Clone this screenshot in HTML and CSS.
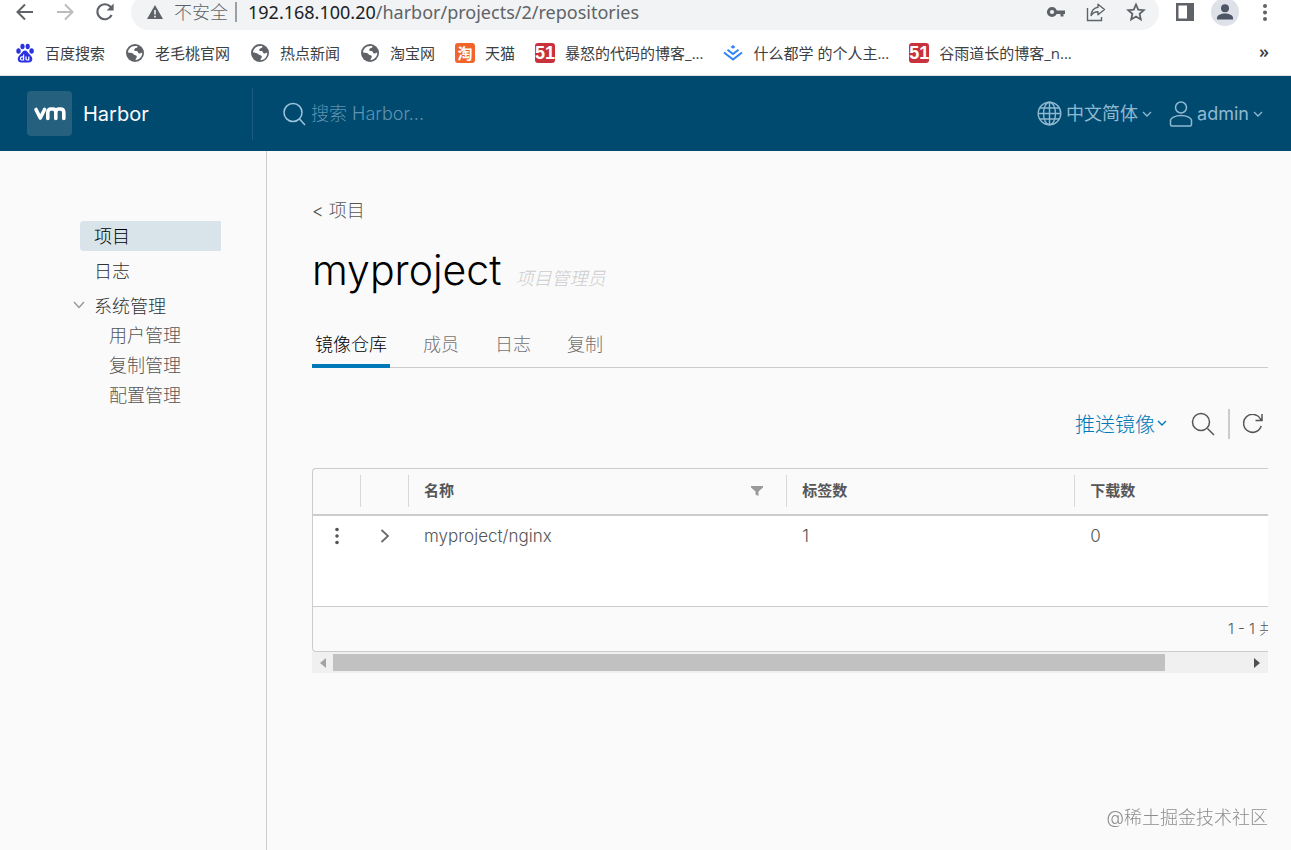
FILE: index.html
```html
<!DOCTYPE html>
<html lang="zh-CN">
<head>
    <meta charset="UTF-8">
    <meta name="viewport" content="width=device-width, initial-scale=1.0">
    <title>Harbor</title>
    <link rel="stylesheet" href="styles.css">
</head>
<body>
    <!-- Browser toolbar -->
    <div class="toolbar">
        <div class="toolbar-group nav-buttons">
            <button class="tool-btn" type="button" aria-label="后退">
                <svg width="20" height="20" viewBox="0 0 20 20" fill="none" stroke="#5f6368" stroke-width="2"><path d="M18 10H3M10 2.500L2.500 10l7.500 7.500"/></svg>
            </button>
            <button class="tool-btn" type="button" aria-label="前进">
                <svg width="20" height="20" viewBox="0 0 20 20" fill="none" stroke="#babcbe" stroke-width="2"><path d="M2 10h15M10 2.500l7.500 7.500-7.500 7.500"/></svg>
            </button>
            <button class="tool-btn" type="button" aria-label="重新加载">
                <svg width="20" height="20" viewBox="0 0 20 20" fill="none" stroke="#5f6368" stroke-width="2.200"><path d="M16.600 13A7.500 7.500 0 1 1 15.500 4.800L17 6.500"/><path d="M18.600 1.500v7h-7z" fill="#5f6368" stroke="none"/></svg>
            </button>
        </div>
        <div class="address">
            <svg width="16" height="16" viewBox="0 0 16 16"><path d="M8 1l8 14H0z" fill="#5f6368"/><path d="M8 6v4.500M8 11.800v1.700" stroke="#f1f3f4" stroke-width="1.600"/></svg>
            <span class="unsafe">不安全</span>
            <span class="url"><b>192.168.100.20</b>/harbor/projects/2/repositories</span>
            <div class="address-actions">
                <button class="tool-btn" type="button" aria-label="密码">
                    <svg width="20" height="20" viewBox="0 0 20 20"><circle cx="6" cy="10" r="3.600" fill="none" stroke="#5f6368" stroke-width="3"/><path d="M10 8.500h9v3.500h-1.500v2.500h-3V12H10z" fill="#5f6368"/></svg>
                </button>
                <button class="tool-btn" type="button" aria-label="分享">
                    <svg width="20" height="20" viewBox="0 0 20 20" fill="none" stroke="#5f6368" stroke-width="1.400"><path d="M1.500 6v12.500h14V15"/><path d="M12 2.200l6.500 5.300-6.500 5.200V9.800c-3 0-5 .8-7 3.700.5-5 3-7.800 7-8.300z" stroke-linejoin="round"/></svg>
                </button>
                <button class="tool-btn" type="button" aria-label="收藏">
                    <svg width="20" height="20" viewBox="0 0 20 20" fill="none" stroke="#5f6368" stroke-width="1.800"><path d="M10 2.500l2.200 5.200 5.600.5-4.200 3.700 1.200 5.500L10 14.500l-4.800 2.900 1.200-5.500-4.200-3.700 5.600-.5z"/></svg>
                </button>
            </div>
        </div>
        <div class="toolbar-group">
            <button class="tool-btn" type="button" aria-label="侧边栏">
                <svg width="20" height="20" viewBox="0 0 20 20"><path d="M1 1h18v18H1z" fill="#5f6368"/><path d="M3.500 3.500h8.500v13H3.500z" fill="#fff"/></svg>
            </button>
            <button class="tool-btn profile" type="button" aria-label="用户">
                <svg width="20" height="20" viewBox="0 0 20 20" fill="#4d5567"><circle cx="10" cy="6.300" r="4"/><path d="M2 17.500v-1.500c0-3 4-4.500 8-4.500s8 1.500 8 4.500v1.500z"/></svg>
            </button>
            <button class="tool-btn" type="button" aria-label="菜单">
                <svg width="20" height="20" viewBox="0 0 20 20" fill="#5f6368"><circle cx="10" cy="4" r="2"/><circle cx="10" cy="10.500" r="2"/><circle cx="10" cy="17" r="2"/></svg>
            </button>
        </div>
    </div>

    <!-- Bookmarks -->
    <nav class="bookmarks">
        <a href="#">
            <svg width="20" height="20" viewBox="0 0 20 20" fill="#2932e1"><ellipse cx="3.500" cy="8" rx="2.200" ry="2.800"/><ellipse cx="7.500" cy="3.500" rx="2.100" ry="2.800"/><ellipse cx="12.700" cy="3.500" rx="2.100" ry="2.800"/><ellipse cx="16.600" cy="8" rx="2.200" ry="2.800"/><path d="M10 7.500c2 0 2.800 2 4.500 3.700 2.200 2 3 3.300 2.800 5.300-.3 2.300-2 3.200-4.200 3H7c-2.300.2-4-.7-4.200-3-.2-2 .6-3.300 2.700-5.300C7.200 9.500 8 7.500 10 7.500z"/><path d="M8.600 11.500v5.500H7a1.500 1.500 0 0 1 0-3.200h1.600M11 13.500v2.500c0 .8.400 1 1.200 1h1.600v-3.500" fill="none" stroke="#fff" stroke-width="1.200"/></svg>
            百度搜索
        </a>
        <a href="#">
            <svg width="20" height="20" viewBox="0 0 20 20"><circle cx="10" cy="10" r="9" fill="#5f6368"/><path d="M12.500 3.200c.2 2-2.300 1.500-3 2.800-.6 1.200-.2 2.200 1.500 2 2.200-.2 1.800 2.500 3.500 2.600 1.500 0 1.800-1 2.700-1 .3 3.700-2.500 7.400-6.700 7.600 0-2 1.500-1.800 1.300-3.700-.2-1.500-2-1-3-2C7.700 10.300 6.500 9.700 3 9.600c0-3.600 3.500-7.800 9.500-6.400z" fill="#fff"/></svg>
            老毛桃官网
        </a>
        <a href="#">
            <svg width="20" height="20" viewBox="0 0 20 20"><circle cx="10" cy="10" r="9" fill="#5f6368"/><path d="M12.500 3.200c.2 2-2.300 1.500-3 2.800-.6 1.200-.2 2.200 1.500 2 2.200-.2 1.800 2.500 3.500 2.600 1.500 0 1.800-1 2.700-1 .3 3.700-2.500 7.400-6.700 7.600 0-2 1.500-1.800 1.300-3.700-.2-1.500-2-1-3-2C7.700 10.300 6.500 9.700 3 9.600c0-3.600 3.500-7.800 9.500-6.400z" fill="#fff"/></svg>
            热点新闻
        </a>
        <a href="#">
            <svg width="20" height="20" viewBox="0 0 20 20"><circle cx="10" cy="10" r="9" fill="#5f6368"/><path d="M12.500 3.200c.2 2-2.300 1.500-3 2.800-.6 1.200-.2 2.200 1.500 2 2.200-.2 1.800 2.500 3.500 2.600 1.500 0 1.800-1 2.700-1 .3 3.700-2.500 7.400-6.700 7.600 0-2 1.500-1.800 1.300-3.700-.2-1.500-2-1-3-2C7.700 10.300 6.500 9.700 3 9.600c0-3.600 3.500-7.800 9.500-6.400z" fill="#fff"/></svg>
            淘宝网
        </a>
        <a href="#"><span class="favicon tao">淘</span>天猫</a>
        <a href="#"><span class="favicon cto">51</span>暴怒的代码的博客_...</a>
        <a href="#">
            <svg width="20" height="20" viewBox="0 0 20 20" fill="none" stroke="#2f83f7" stroke-width="2"><path d="M1 9.500l9 7 9-7M4.500 6.800L10 11l5.500-4.200"/><path d="M10 2l2.400 1.900L10 5.800 7.600 3.900z" fill="#2f83f7" stroke="none"/></svg>
            什么都学 的个人主...
        </a>
        <a href="#"><span class="favicon cto">51</span>谷雨道长的博客_n...</a>
        <button class="more" type="button" aria-label="更多书签">»</button>
    </nav>

    <!-- Harbor header -->
    <header class="header">
        <a class="branding" href="#">
            <span class="logo">
                <svg width="34" height="16" viewBox="0 0 34 16" fill="none" stroke="#fff" stroke-width="3.600" stroke-linecap="round" stroke-linejoin="round"><path d="M3 3.500l4.300 8.500L11.600 3.500"/><path d="M14.800 12.500V6.500Q14.800 3 18 3H20Q22.800 3 22.800 6.500V12.500M22.800 6.500Q22.800 3 25.500 3H27.500Q30.800 3 30.800 6.500V12.500"/></svg>
            </span>
            Harbor
        </a>
        <label class="search">
            <svg width="24" height="24" viewBox="0 0 24 24" fill="none" stroke="#9fc5db" stroke-width="1.500"><circle cx="10" cy="10.500" r="9"/><path d="M16.500 17l5.500 6"/></svg>
            <input type="text" placeholder="搜索 Harbor..." aria-label="搜索 Harbor">
        </label>
        <div class="header-actions">
            <button type="button">
                <svg width="25" height="25" viewBox="0 0 25 25" fill="none" stroke="#8fb9d0" stroke-width="1.400"><circle cx="12.500" cy="12.500" r="11.300"/><ellipse cx="12.500" cy="12.500" rx="6" ry="11.300"/><path d="M12.500 1v23M1 12.500h23M3 7h19M3 18h19"/></svg>
                中文简体
                <svg width="10" height="6" viewBox="0 0 10 6" fill="none" stroke="#8fb9d0" stroke-width="1.300"><path d="M1 1l4 4 4-4"/></svg>
            </button>
            <button type="button">
                <svg width="24" height="26" viewBox="0 0 24 26" fill="none" stroke="#8fb9d0" stroke-width="1.500"><circle cx="12" cy="6.500" r="5.500"/><path d="M1.500 23.500v-4C1.500 17 6 14.500 12 14.500s10.500 2.500 10.500 5v4q0 1.500-1.500 1.500H3q-1.500 0-1.500-1.500z"/></svg>
                admin
                <svg width="10" height="6" viewBox="0 0 10 6" fill="none" stroke="#8fb9d0" stroke-width="1.300"><path d="M1 1l4 4 4-4"/></svg>
            </button>
        </div>
    </header>

    <div class="main">
        <nav class="sidebar">
            <a class="nav-link active" href="#">项目</a>
            <a class="nav-link" href="#">日志</a>
            <div class="nav-group">
                <button class="nav-toggle" type="button">
                    <svg width="12" height="8" viewBox="0 0 12 8" fill="none" stroke="#9a9a9a" stroke-width="1.500"><path d="M1 1l5 5.500L11 1"/></svg>
                    系统管理
                </button>
                <a class="nav-sub" href="#">用户管理</a>
                <a class="nav-sub" href="#">复制管理</a>
                <a class="nav-sub" href="#">配置管理</a>
            </div>
        </nav>

        <main class="content">
            <a class="back" href="#">&lt; 项目</a>
            <div class="title">
                <h1>myproject</h1>
                <span class="role">项目管理员</span>
            </div>

            <div class="tabs" role="tablist">
                <button class="tab active" type="button" role="tab">镜像仓库</button>
                <button class="tab" type="button" role="tab">成员</button>
                <button class="tab" type="button" role="tab">日志</button>
                <button class="tab" type="button" role="tab">复制</button>
            </div>

            <div class="actions">
                <button class="push" type="button">
                    推送镜像
                    <svg width="10" height="6" viewBox="0 0 10 6" fill="none" stroke="#0079b8" stroke-width="1.400"><path d="M1 1l4 4 4-4"/></svg>
                </button>
                <button class="find" type="button" aria-label="搜索">
                    <svg width="24" height="24" viewBox="0 0 24 24" fill="none" stroke="#565656" stroke-width="1.500"><circle cx="10" cy="10" r="8.500"/><path d="M16.500 16.500l6.500 6.500"/></svg>
                </button>
                <button class="refresh" type="button" aria-label="刷新">
                    <svg width="20" height="20" viewBox="0 0 20 20" fill="none" stroke="#565656" stroke-width="1.500"><path d="M18.200 12A9 9 0 1 1 17.500 5L18.500 6.500M19 0V6.500h-6.500"/></svg>
                </button>
            </div>

            <div class="datagrid">
                <table>
                    <colgroup>
                        <col class="col-icon">
                        <col class="col-icon">
                        <col class="col-name">
                        <col class="col-tags">
                        <col>
                    </colgroup>
                    <thead>
                        <tr>
                            <th><div class="head"></div></th>
                            <th><div class="head"></div></th>
                            <th>
                                <div class="head">
                                    名称
                                    <button class="filter" type="button" aria-label="筛选">
                                        <svg width="12" height="10" viewBox="0 0 12 10" fill="#9a9a9a"><path d="M0 0h12v1.500L7.500 5.500V10l-3-1.500v-3L0 1.500z"/></svg>
                                    </button>
                                </div>
                            </th>
                            <th><div class="head">标签数</div></th>
                            <th><div class="head last">下载数</div></th>
                        </tr>
                    </thead>
                    <tbody>
                        <tr>
                            <td class="icon-cell">
                                <button type="button" aria-label="操作"><svg width="6" height="18" viewBox="0 0 6 18" fill="#565656"><circle cx="3" cy="2.500" r="1.800"/><circle cx="3" cy="9" r="1.800"/><circle cx="3" cy="15.500" r="1.800"/></svg></button>
                            </td>
                            <td class="icon-cell">
                                <button type="button" aria-label="展开"><svg width="10" height="14" viewBox="0 0 10 14" fill="none" stroke="#6a6a6a" stroke-width="1.800"><path d="M1.500 1L8 7l-6.500 6"/></svg></button>
                            </td>
                            <td>myproject/nginx</td>
                            <td>1</td>
                            <td>0</td>
                        </tr>
                    </tbody>
                    <tfoot>
                        <tr>
                            <td colspan="5">1 - 1 共计 1 条记录</td>
                        </tr>
                    </tfoot>
                </table>
            </div>
            <div class="scrollbar">
                <svg width="6" height="10" viewBox="0 0 6 10" fill="#a3a3a3"><path d="M6 0v10L0 5z"/></svg>
                <div class="track"><div class="thumb"></div></div>
                <svg width="6" height="10" viewBox="0 0 6 10" fill="#505050"><path d="M0 0v10l6-5z"/></svg>
            </div>
        </main>
    </div>
    <div class="watermark">@稀土掘金技术社区</div>
</body>
</html>
```
FILE: styles.css
```css
:root {
    --header-bg: #004a70;
    --header-text: #8fb9d0;
    --page-bg: #fafafa;
    --line: #cccccc;
    --blue: #0079b8;
    --text: #565656;
}

* {
    box-sizing: border-box;
}

body {
    margin: 0;
    min-height: 100vh;
    display: flex;
    flex-direction: column;
    background: var(--page-bg);
    color: var(--text);
    font-family: Inter, "Noto Sans CJK SC", sans-serif;
    font-size: 18px;
    font-weight: 300;
}

a {
    color: inherit;
    text-decoration: none;
}

button {
    background: none;
    border: none;
    padding: 0;
    color: inherit;
    font: inherit;
    cursor: pointer;
}

svg {
    display: block;
    flex: none;
}

/* Browser toolbar */
.toolbar {
    height: 30px;
    padding: 0 16px 0 15px;
    display: flex;
    align-items: flex-end;
    gap: 16px;
    background: white;
    overflow: hidden;
    font-family: "Open Sans", "Noto Sans CJK SC", sans-serif;
}

.toolbar-group {
    display: flex;
    align-items: flex-end;
    gap: 16px;
}

.nav-buttons {
    gap: 20px;
}

.tool-btn {
    width: 20px;
    height: 36px;
    display: flex;
    align-items: center;
    justify-content: center;
    flex: none;
}

.address {
    flex: 1;
    height: 36px;
    padding: 0 13px 0 16px;
    display: flex;
    align-items: center;
    border-radius: 18px;
    background: #f1f3f4;
    color: #5f6368;
}

.unsafe {
    margin-left: 11px;
    padding-right: 7px;
    line-height: 20px;
    border-right: 2px solid #9aa0a6;
}

.url {
    margin-left: 11px;
    font-family: "Noto Sans", sans-serif;
    font-weight: 400;
}

.url b {
    color: #202124;
    font-weight: 400;
}

.address-actions {
    margin-left: auto;
    display: flex;
    gap: 20px;
}

.profile {
    width: 28px;
    height: 28px;
    margin-bottom: 4px;
    border-radius: 50%;
    background: #dfe1e8;
}

/* Bookmarks */
.bookmarks {
    height: 46px;
    padding: 0 22px 0 15px;
    display: flex;
    align-items: center;
    gap: 20px;
    background: white;
    border-bottom: 1px solid #dde3e6;
    color: #3c4043;
    font-family: "Open Sans", "Noto Sans CJK SC", sans-serif;
    font-size: 15px;
    font-weight: 400;
    white-space: nowrap;
}

.bookmarks a {
    display: flex;
    align-items: center;
    gap: 10px;
}

.favicon {
    width: 20px;
    height: 20px;
    border-radius: 3px;
    color: white;
    font-weight: 700;
    line-height: 20px;
    text-align: center;
}

.tao {
    background: #f1652b;
    font-size: 15px;
}

.cto {
    background: #c8323d;
    font-family: "Liberation Sans Narrow", "Liberation Sans", sans-serif;
    font-size: 18px;
}

.more {
    margin-left: auto;
    padding-bottom: 4px;
    font-size: 18px;
    font-weight: 600;
}

/* Harbor header */
.header {
    height: 75px;
    padding-right: 28px;
    display: flex;
    align-items: center;
    background: var(--header-bg);
    color: var(--header-text);
}

.branding {
    width: 253px;
    height: 52px;
    padding-left: 27px;
    display: flex;
    align-items: center;
    gap: 11px;
    border-right: 1px solid #1b5b7d;
    color: white;
    font-size: 20px;
    font-weight: 400;
}

.logo {
    width: 45px;
    height: 45px;
    display: flex;
    align-items: center;
    justify-content: center;
    border-radius: 4px;
    background: #25607f;
}

.search {
    flex: 1;
    margin-left: 30px;
    display: flex;
    align-items: center;
    gap: 4px;
}

.search input {
    flex: 1;
    min-width: 0;
    padding: 0;
    border: none;
    outline: none;
    background: none;
    color: white;
    font: inherit;
}

.search input::placeholder {
    color: #5f93b0;
}

.header-actions {
    display: flex;
    gap: 17px;
    font-weight: 400;
}

.header-actions button {
    display: flex;
    align-items: center;
    gap: 4px;
    line-height: 24px;
}

/* Page body */
.main {
    flex: 1;
    display: flex;
}

.sidebar {
    width: 267px;
    padding: 70px 45px 0 80px;
    border-right: 1px solid var(--line);
    color: #313131;
}

.nav-link,
.nav-sub {
    display: block;
    height: 30px;
    line-height: 31px;
    padding-left: 14px;
}

.nav-link {
    margin-bottom: 5px;
}

.nav-link.active {
    background: #d9e4ea;
    border-radius: 4px 0 0 4px;
    color: black;
}

.nav-toggle {
    height: 29px;
    margin-left: -7px;
    padding-bottom: 2px;
    display: flex;
    align-items: center;
    gap: 9px;
}

.nav-sub {
    padding-left: 29px;
    color: var(--text);
}

.content {
    flex: 1;
    min-width: 0;
    padding: 45px 23px 24px 45px;
}

.back {
    display: block;
    line-height: 30px;
}

.title {
    height: 60px;
    margin-top: 15px;
    display: flex;
    align-items: baseline;
    gap: 14px;
}

.title h1 {
    margin: 0;
    color: black;
    font-size: 41px;
    font-weight: 300;
    line-height: 58px;
}

.role {
    color: var(--line);
    font-style: italic;
}

.tabs {
    height: 46px;
    margin-top: 21px;
    display: flex;
    gap: 30px;
    box-shadow: inset 0 -1px 0 var(--line);
}

.tab {
    padding: 0 3px;
    border-bottom: 4px solid transparent;
    color: #737373;
}

.tab.active {
    border-bottom-color: var(--blue);
    color: black;
}

.actions {
    height: 30px;
    margin: 41px 5px 29px 0;
    display: flex;
    justify-content: flex-end;
}

.push {
    padding-bottom: 2px;
    display: flex;
    align-items: center;
    gap: 2px;
    color: var(--blue);
    font-size: 20px;
}

.find {
    margin-left: 24px;
    padding-right: 13px;
    border-right: 2px solid var(--line);
}

.refresh {
    margin-left: 13px;
}

/* Table, wider than its frame */
.datagrid {
    overflow: hidden;
    border: 1px solid var(--line);
    border-right: none;
    border-radius: 4px 0 0 4px;
}

.datagrid table {
    width: 110%;
    table-layout: fixed;
    border-collapse: collapse;
}

.col-icon {
    width: 48px;
}

.col-name {
    width: 36%;
}

.col-tags {
    width: 288px;
}

.datagrid th {
    height: 46px;
    padding: 0 0 1px;
    border-bottom: 2px solid var(--line);
    font-size: 15px;
    font-weight: 600;
    text-align: left;
}

.head {
    height: 32px;
    padding: 0 23px 4px 15px;
    display: flex;
    align-items: center;
    border-right: 1px solid #d8d8d8;
}

.head.last {
    border-right: none;
}

.filter {
    margin-left: auto;
    padding-top: 4px;
}

.datagrid tbody td {
    height: 91px;
    padding: 10px 15px;
    background: white;
    font-size: 17px;
    line-height: 20px;
    vertical-align: top;
}

.datagrid .icon-cell {
    padding: 10px 0;
}

.icon-cell button {
    width: 100%;
    height: 20px;
    display: flex;
    align-items: center;
    justify-content: center;
}

.datagrid tfoot td {
    height: 45px;
    padding: 0 15px 3px;
    border-top: 1px solid var(--line);
    font-size: 15px;
    text-align: right;
}

.scrollbar {
    height: 21px;
    padding: 0 8px;
    display: flex;
    align-items: center;
    gap: 7px;
    background: #f0f0f0;
}

.track {
    flex: 1;
    height: 17px;
}

.thumb {
    width: 91%;
    height: 100%;
    background: #c1c1c1;
}

.watermark {
    position: fixed;
    right: 23px;
    bottom: 21px;
    color: #8c8c8c;
}
```
